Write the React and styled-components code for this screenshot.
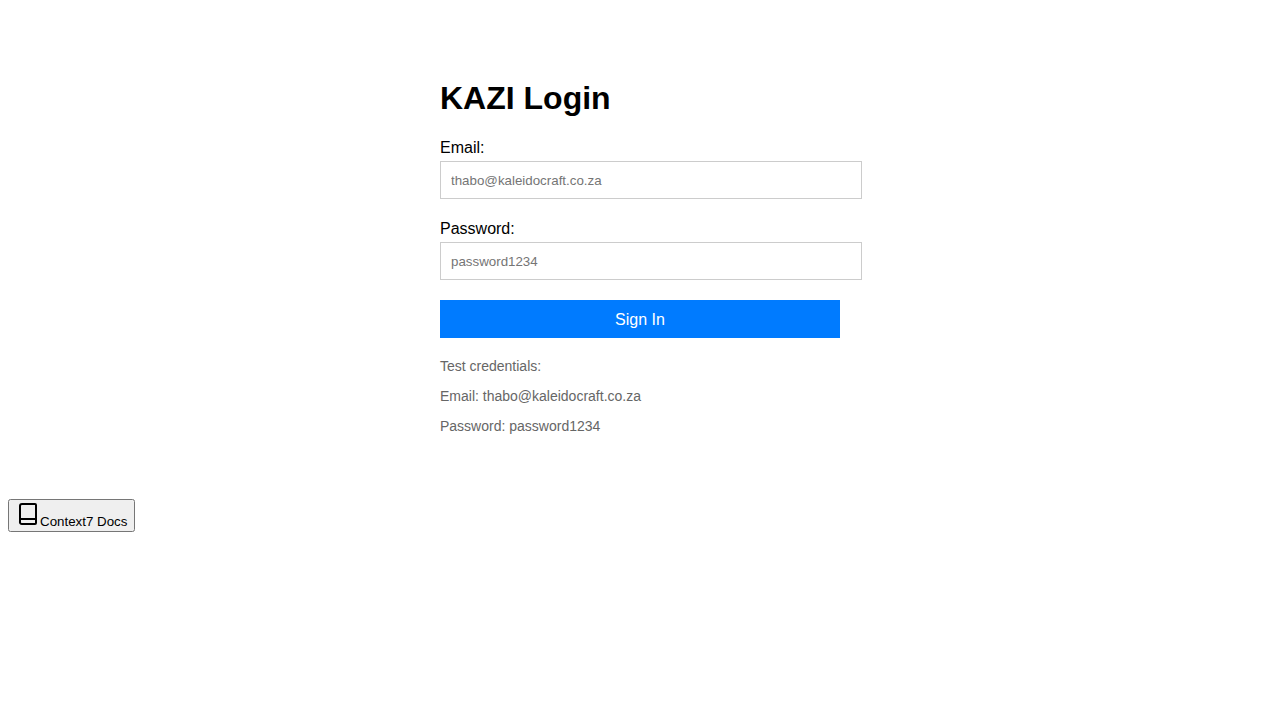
import React from "react";
import styled, { createGlobalStyle } from "styled-components";

const GlobalStyle = createGlobalStyle`
  body {
    margin: 8px;
    background: #fff;
    color: #000;
    font-family: "Liberation Sans", Arial, sans-serif;
    font-size: 16px;
  }
`;

const LoginPanel = styled.main`
  max-width: 400px;
  margin: 50px auto 31px;
  padding: 20px;
`;

const Title = styled.h1`
  margin: 0 0 20px;
  font-size: 32px;
  line-height: 40px;
`;

const Field = styled.div`
  margin-bottom: 20px;
`;

const Label = styled.label`
  display: block;
  line-height: 19px;
  margin-bottom: 4px;
`;

const TextInput = styled.input`
  display: block;
  width: 100%;
  height: 16px;
  padding: 11px 10px 9px;
  border: 1px solid #ccc;
  font-family: inherit;
  line-height: 16px;
`;

const SubmitButton = styled.button`
  display: block;
  width: 100%;
  padding: 10px 10px 9px;
  border: none;
  background: #007bff;
  color: #fff;
  font-family: inherit;
  font-size: 16px;
  line-height: 19px;
  cursor: pointer;
`;

const Credentials = styled.section`
  margin-top: 20px;
  color: #666;
  font-size: 14px;
`;

const CredentialLine = styled.p`
  margin: 0 0 14px;
  line-height: 16px;
`;

const DocsButton = styled.button`
  padding: 1px 6px;
  font-family: inherit;
`;

function BookIcon() {
  return (
    <svg
      width="24"
      height="24"
      viewBox="0 0 24 24"
      fill="none"
      stroke="currentColor"
      strokeWidth="2"
      strokeLinecap="round"
      strokeLinejoin="round"
      aria-hidden="true"
    >
      <path d="M4 19.500V4a2 2 0 0 1 2-2h13a1 1 0 0 1 1 1v18a1 1 0 0 1-1 1H6a2 2 0 0 1-2-2.500V17H20" />
    </svg>
  );
}

export default function App() {
  return (
    <>
      <GlobalStyle />
      <LoginPanel>
        <Title>KAZI Login</Title>
        <form onSubmit={(event) => event.preventDefault()}>
          <Field>
            <Label htmlFor="email">Email:</Label>
            <TextInput id="email" type="email" placeholder="thabo@kaleidocraft.co.za" />
          </Field>
          <Field>
            <Label htmlFor="password">Password:</Label>
            <TextInput id="password" type="password" placeholder="password1234" />
          </Field>
          <SubmitButton type="submit">Sign In</SubmitButton>
        </form>
        <Credentials>
          <CredentialLine>Test credentials:</CredentialLine>
          <CredentialLine>Email: thabo@kaleidocraft.co.za</CredentialLine>
          <CredentialLine>Password: password1234</CredentialLine>
        </Credentials>
      </LoginPanel>
      <DocsButton type="button">
        <BookIcon />
        Context7 Docs
      </DocsButton>
    </>
  );
}
